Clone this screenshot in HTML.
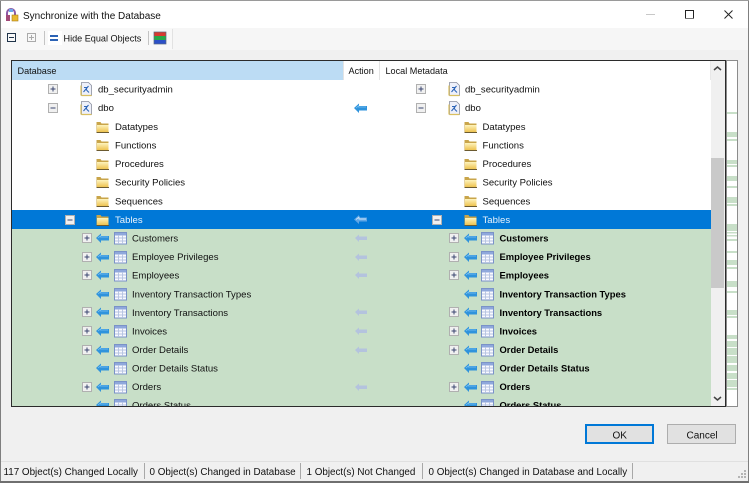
<!DOCTYPE html>
<html><head><meta charset="utf-8"><style>
html,body{margin:0;padding:0;background:#f0f0f0}
svg{display:block;position:absolute;left:0;top:0}
text{font-family:"Liberation Sans",sans-serif;font-size:9.55px;fill:#111}
.b{font-weight:bold;fill:#000;font-size:9.4px}
.w{fill:#e8f2fc}
.s{font-size:9.85px;fill:#111}
.h{font-size:9.1px;fill:#111}
</style></head><body>
<svg width="749" height="483" viewBox="0 0 749 483" xmlns="http://www.w3.org/2000/svg">
<defs>
<linearGradient id="fg" x1="0" y1="0" x2="0" y2="1"><stop offset="0" stop-color="#fdf3bd"/><stop offset="1" stop-color="#eec350"/></linearGradient>
<g id="fo"><path d="M.5 2h4l1 1.500h7v8.500h-12z" fill="#c9a54a"/><path d="M1 5h11.500v7h-11.500z" fill="url(#fg)"/><path d="M.5 12.500h12.500" stroke="#6b5a30" stroke-width="1"/></g>
<g id="db"><path d="M1.500.5h7l3 3v10h-10z" fill="#eef0fa" stroke="#8a8f9e" stroke-width=".8"/><path d="M1 13.500v-10M1.500 13.500h10" stroke="#d9bf60" stroke-width="1.200"/><path d="M3.500 10l5-6M4 5.500h2.500v2.500M6.500 8l2.500 2.500" stroke="#2f66b8" stroke-width="1.100" fill="none"/></g>
<g id="pl"><rect x=".5" y=".5" width="9" height="9" fill="#f0f0f0" stroke="#b0b0b0"/><path d="M2.500 5h5M5 2.500v5" stroke="#3a4670"/></g>
<g id="mi"><rect x=".5" y=".5" width="9" height="9" fill="#f0f0f0" stroke="#b0b0b0"/><path d="M2.500 5h5" stroke="#3a4670"/></g>
<g id="ar"><path d="M0 5l5-4.500v2.500h8v4.500h-8v2.500z" fill="#2f93dc"/><path d="M2 5l2.500-2v1h7.500" fill="none" stroke="#7cc2f0" stroke-width=".8"/></g>
<g id="af"><path d="M0 4l4-3.500v2h8v3.500h-8v2z" fill="#b4c3de"/></g>
<g id="aw"><path d="M0 4.500l5-4.500v2.500h8v4h-8v2.500z" fill="#5fa6e6"/><path d="M2 4.500l3-2.300v1.800h7" fill="none" stroke="#cfe4f8" stroke-width=".9"/></g>
<g id="tb"><rect x=".5" y=".5" width="12" height="11.500" fill="#fafaff" stroke="#7a92c8"/><rect x="1" y="1" width="11" height="2.500" fill="#8fa8dc"/><path d="M1 6h11M1 9h11M4.500 3v9M8.500 3v9" stroke="#b4c2e2" stroke-width=".9"/></g>
<clipPath id="gc"><rect x="12" y="61" width="713" height="345"/></clipPath>
</defs>

<!-- window -->
<rect x="0" y="0" width="749" height="483" fill="#f0f0f0"/>
<rect x="0" y="0" width="749" height="28" fill="#fff"/>
<rect x="0" y="28" width="749" height="22" fill="#f6f6f6"/>
<rect x="0" y="28" width="172" height="22" fill="#f8f8f8"/>
<rect x="172" y="29" width="1" height="20" fill="#e2e2e2"/>
<!-- title -->
<path d="M7 19v-6a4 4 0 0 1 8 0v2" fill="none" stroke="#8c5aa8" stroke-width="2"/><rect x="6" y="15" width="4" height="6" fill="#a24a78"/><rect x="12" y="15" width="6" height="6" fill="#e8b830" stroke="#a87c18" stroke-width=".6"/><rect x="9" y="9" width="4" height="3" fill="#6aa8e8"/>
<text x="23" y="19" style="font-size:10px;fill:#111">Synchronize with the Database</text>
<rect x="646" y="14" width="9" height="1" fill="#c8c8c8"/>
<rect x="685.500" y="10.500" width="8" height="8" fill="none" stroke="#222"/><rect x="685" y="18" width="9" height="1" fill="#777"/>
<path d="M724.500 10.500l8 8M732.500 10.500l-8 8" stroke="#222" stroke-width="1"/>
<!-- toolbar -->
<rect x="7.500" y="33.500" width="8" height="8" fill="none" stroke="#20344a"/><path d="M9 37.500h5" stroke="#20344a"/>
<rect x="27.500" y="33.500" width="8" height="8" fill="none" stroke="#aaa"/><path d="M29 37.500h5M31.500 35v5" stroke="#aaa"/>
<rect x="44" y="31" width="1" height="14" fill="#c4c4c4"/>
<rect x="48" y="31" width="14" height="14" fill="#fff"/>
<rect x="50" y="35" width="8" height="2" fill="#2c63b5"/><rect x="50" y="39" width="8" height="2" fill="#2c63b5"/>
<text x="63.500" y="41.500" class="s" style="font-size:9.1px">Hide Equal Objects</text>
<rect x="148" y="31" width="1" height="14" fill="#c4c4c4"/>
<rect x="154" y="32" width="12" height="4" fill="#d83a30"/><rect x="154" y="36" width="12" height="4" fill="#28a848"/><rect x="154" y="40" width="12" height="4" fill="#2c50c8"/><rect x="154" y="32" width="12" height="12" fill="none" stroke="#5a6a80" stroke-width=".7"/>

<!-- minimap -->
<rect x="726" y="60" width="12" height="347" fill="#fff"/>
<g fill="#c8dfc8">
<rect x="727" y="112" width="10" height="2"/><rect x="727" y="132" width="10" height="5"/><rect x="727" y="139" width="10" height="2"/><rect x="727" y="160" width="10" height="4"/><rect x="727" y="165" width="10" height="2"/><rect x="727" y="176" width="10" height="5"/><rect x="727" y="186" width="10" height="2"/><rect x="727" y="197" width="10" height="6"/><rect x="727" y="204" width="10" height="2"/><rect x="727" y="224" width="10" height="7"/><rect x="727" y="232" width="10" height="1.500"/><rect x="727" y="235" width="10" height="1.500"/><rect x="727" y="239" width="10" height="2"/><rect x="727" y="251" width="10" height="2"/><rect x="727" y="260" width="10" height="5"/><rect x="727" y="267" width="10" height="2"/><rect x="727" y="281" width="10" height="6"/><rect x="727" y="291" width="10" height="2"/><rect x="727" y="310" width="10" height="5"/><rect x="727" y="316" width="10" height="2"/><rect x="727" y="335" width="10" height="4"/><rect x="727" y="341" width="10" height="6"/><rect x="727" y="348" width="10" height="7"/><rect x="727" y="356" width="10" height="7"/><rect x="727" y="365" width="10" height="6"/><rect x="727" y="373" width="10" height="6"/><rect x="727" y="380" width="10" height="7"/><rect x="727" y="388" width="10" height="2"/>
</g>
<rect x="726.500" y="60.500" width="11" height="346" fill="none" stroke="#8c8c8c"/>

<!-- grid -->
<rect x="11.500" y="60.500" width="714" height="346" fill="#fff" stroke="#2b2b2b"/>
<g clip-path="url(#gc)">
<rect x="12" y="61" width="331" height="19" fill="#bcdcf4"/>
<rect x="343" y="61" width="1" height="19" fill="#e4e4e4"/>
<rect x="379" y="61" width="1" height="19" fill="#e4e4e4"/>
<text x="17.500" y="74" class="h">Database</text>
<text x="348.500" y="74" class="h">Action</text>
<text x="385.500" y="74" class="h">Local Metadata</text>

<rect x="12" y="210" width="699" height="19" fill="#0078d7"/>
<rect x="12" y="229" width="699" height="178" fill="#c8dfc8"/>

<!-- level 1 -->
<use href="#pl" x="48" y="84"/><use href="#db" x="80" y="82"/><text x="98" y="92.500">db_securityadmin</text>
<use href="#pl" x="416" y="84"/><use href="#db" x="448" y="82"/><text x="465" y="92.500">db_securityadmin</text>
<use href="#mi" x="48" y="103"/><use href="#db" x="80" y="101"/><text x="98" y="111">dbo</text>
<use href="#ar" x="354" y="103"/>
<use href="#mi" x="416" y="103"/><use href="#db" x="448" y="101"/><text x="465" y="111">dbo</text>

<!-- folders -->
<use href="#fo" x="96" y="120"/><text x="115" y="130">Datatypes</text><use href="#fo" x="464" y="120"/><text x="482.500" y="130">Datatypes</text>
<use href="#fo" x="96" y="138"/><text x="115" y="148.500">Functions</text><use href="#fo" x="464" y="138"/><text x="482.500" y="148.500">Functions</text>
<use href="#fo" x="96" y="157"/><text x="115" y="167">Procedures</text><use href="#fo" x="464" y="157"/><text x="482.500" y="167">Procedures</text>
<use href="#fo" x="96" y="175"/><text x="115" y="185.500">Security Policies</text><use href="#fo" x="464" y="175"/><text x="482.500" y="185.500">Security Policies</text>
<use href="#fo" x="96" y="194"/><text x="115" y="204.500">Sequences</text><use href="#fo" x="464" y="194"/><text x="482.500" y="204.500">Sequences</text>
<use href="#mi" x="65" y="215"/><use href="#fo" x="96" y="213"/><text x="115" y="223" class="w">Tables</text>
<use href="#aw" x="354" y="215"/>
<use href="#mi" x="432" y="215"/><use href="#fo" x="464" y="213"/><text x="482.500" y="223" class="w">Tables</text>

<!-- tables -->
<use href="#pl" x="82" y="233"/><use href="#ar" x="96" y="233"/><use href="#tb" x="114" y="232"/><text x="132" y="241.500">Customers</text>
<use href="#af" x="355" y="234"/>
<use href="#pl" x="449" y="233"/><use href="#ar" x="464" y="233"/><use href="#tb" x="481" y="232"/><text x="499.500" y="241.500" class="b">Customers</text>

<use href="#pl" x="82" y="252"/><use href="#ar" x="96" y="252"/><use href="#tb" x="114" y="251"/><text x="132" y="260">Employee Privileges</text>
<use href="#af" x="355" y="253"/>
<use href="#pl" x="449" y="252"/><use href="#ar" x="464" y="252"/><use href="#tb" x="481" y="251"/><text x="499.500" y="260" class="b">Employee Privileges</text>

<use href="#pl" x="82" y="270"/><use href="#ar" x="96" y="270"/><use href="#tb" x="114" y="269"/><text x="132" y="278.500">Employees</text>
<use href="#af" x="355" y="271"/>
<use href="#pl" x="449" y="270"/><use href="#ar" x="464" y="270"/><use href="#tb" x="481" y="269"/><text x="499.500" y="278.500" class="b">Employees</text>

<use href="#ar" x="96" y="289"/><use href="#tb" x="114" y="288"/><text x="132" y="297.500">Inventory Transaction Types</text>
<use href="#ar" x="464" y="289"/><use href="#tb" x="481" y="288"/><text x="499.500" y="297.500" class="b">Inventory Transaction Types</text>

<use href="#pl" x="82" y="307"/><use href="#ar" x="96" y="307"/><use href="#tb" x="114" y="306"/><text x="132" y="316">Inventory Transactions</text>
<use href="#af" x="355" y="308"/>
<use href="#pl" x="449" y="307"/><use href="#ar" x="464" y="307"/><use href="#tb" x="481" y="306"/><text x="499.500" y="316" class="b">Inventory Transactions</text>

<use href="#pl" x="82" y="326"/><use href="#ar" x="96" y="326"/><use href="#tb" x="114" y="325"/><text x="132" y="334.500">Invoices</text>
<use href="#af" x="355" y="327"/>
<use href="#pl" x="449" y="326"/><use href="#ar" x="464" y="326"/><use href="#tb" x="481" y="325"/><text x="499.500" y="334.500" class="b">Invoices</text>

<use href="#pl" x="82" y="345"/><use href="#ar" x="96" y="345"/><use href="#tb" x="114" y="344"/><text x="132" y="353">Order Details</text>
<use href="#af" x="355" y="346"/>
<use href="#pl" x="449" y="345"/><use href="#ar" x="464" y="345"/><use href="#tb" x="481" y="344"/><text x="499.500" y="353" class="b">Order Details</text>

<use href="#ar" x="96" y="363"/><use href="#tb" x="114" y="362"/><text x="132" y="371.500">Order Details Status</text>
<use href="#ar" x="464" y="363"/><use href="#tb" x="481" y="362"/><text x="499.500" y="371.500" class="b">Order Details Status</text>

<use href="#pl" x="82" y="382"/><use href="#ar" x="96" y="382"/><use href="#tb" x="114" y="381"/><text x="132" y="390">Orders</text>
<use href="#af" x="355" y="383"/>
<use href="#pl" x="449" y="382"/><use href="#ar" x="464" y="382"/><use href="#tb" x="481" y="381"/><text x="499.500" y="390" class="b">Orders</text>

<use href="#ar" x="96" y="400"/><use href="#tb" x="114" y="399"/><text x="132" y="408.500">Orders Status</text>
<use href="#ar" x="464" y="400"/><use href="#tb" x="481" y="399"/><text x="499.500" y="408.500" class="b">Orders Status</text>

<!-- scrollbar -->
<rect x="710" y="61" width="1" height="19" fill="#e8e8e8"/>
<rect x="711" y="61" width="14" height="345" fill="#f0f0f0"/>
<rect x="711" y="158" width="13" height="130" fill="#c9c9c9"/>
<path d="M714 70l3.500-3 3.500 3" fill="none" stroke="#444" stroke-width="1.500"/>
<path d="M714 397l3.500 3 3.500-3" fill="none" stroke="#444" stroke-width="1.500"/>
</g>

<!-- buttons -->
<rect x="586" y="425" width="67" height="18" fill="#e1e1e1" stroke="#0078d7" stroke-width="2"/>
<text x="612.500" y="438.500" style="font-size:10px;fill:#111">OK</text>
<rect x="667.500" y="424.500" width="68" height="19" fill="#e1e1e1" stroke="#adadad"/>
<text x="686.500" y="438.500" style="font-size:10px;fill:#111">Cancel</text>

<!-- status bar -->
<rect x="1" y="461" width="747" height="1" fill="#e0e0e0"/>
<text x="3.500" y="475" class="s">117 Object(s) Changed Locally</text>
<rect x="144" y="463" width="1" height="16" fill="#a8a8a8"/>
<text x="149.500" y="475" class="s">0 Object(s) Changed in Database</text>
<rect x="300" y="463" width="1" height="16" fill="#a8a8a8"/>
<text x="306.500" y="475" class="s">1 Object(s) Not Changed</text>
<rect x="422" y="463" width="1" height="16" fill="#a8a8a8"/>
<text x="428.500" y="475" class="s">0 Object(s) Changed in Database and Locally</text>
<rect x="632" y="463" width="1" height="16" fill="#a8a8a8"/>
<g fill="#b4b4b4"><rect x="744" y="470" width="2" height="2"/><rect x="741" y="473" width="2" height="2"/><rect x="744" y="473" width="2" height="2"/><rect x="738" y="476" width="2" height="2"/><rect x="741" y="476" width="2" height="2"/><rect x="744" y="476" width="2" height="2"/></g>

<!-- window border -->
<rect x="0" y="0" width="1" height="483" fill="#7f7f7f"/>
<rect x="748" y="0" width="1" height="483" fill="#7f7f7f"/>
<rect x="0" y="0" width="749" height="1" fill="#9a9a9a"/>
<rect x="0" y="481" width="749" height="2" fill="#6f6f6f"/>
</svg>
</body></html>
